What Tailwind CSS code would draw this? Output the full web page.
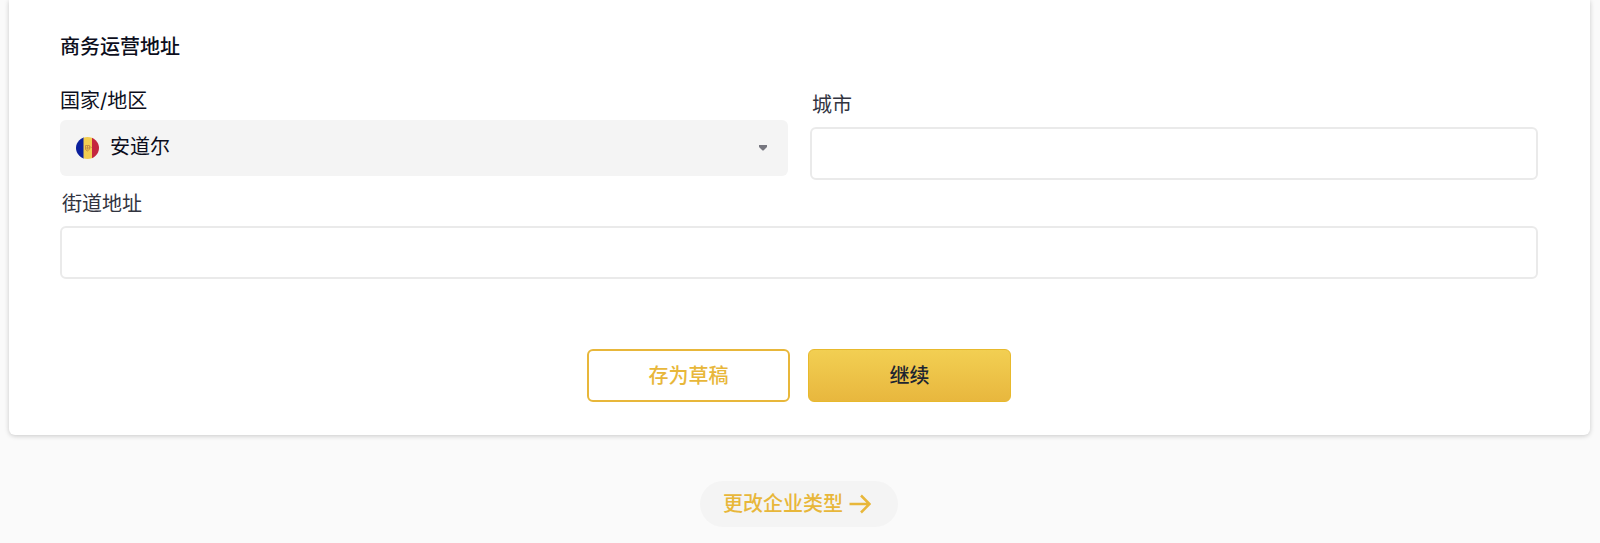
<!DOCTYPE html>
<html lang="zh-CN">
<head>
    <meta charset="UTF-8">
    <meta name="viewport" content="width=device-width, initial-scale=1">
    <title>商务运营地址</title>
    <script src="https://cdn.jsdelivr.net/npm/@tailwindcss/browser@4"></script>
</head>
<body class="bg-[#fafafa] min-h-screen font-['Inter','Noto_Sans_CJK_SC',sans-serif] text-xl leading-7 text-[#0c0e1c]">
    <!-- Address card -->
    <main class="ml-[9px] mr-[10px] pl-[51px] pr-[52px] py-[33px] bg-white rounded-b-md shadow-[0_1px_5px_rgba(0,0,0,0.2)]">
        <form>
            <h2 class="font-medium mb-[26px]">商务运营地址</h2>

            <div class="grid grid-cols-2 gap-x-[22px]">
                <div>
                    <label for="country" class="block mb-[5px]">国家/地区</label>
                    <div class="relative">
                        <select id="country" class="appearance-none block w-full h-14 pl-[50px] pr-12 pb-0.5 rounded-md bg-[#f4f4f4]">
                            <option>安道尔</option>
                        </select>
                        <!-- Flag of Andorra -->
                        <svg class="absolute left-4 top-4 w-[23px] h-6 pointer-events-none" viewBox="0 0 23 24" aria-hidden="true">
                            <clipPath id="flag"><ellipse cx="11.5" cy="12" rx="11.5" ry="11"/></clipPath>
                            <g clip-path="url(#flag)">
                                <path fill="#0a1f9c" d="M0 0h8v24H0z"/>
                                <path fill="#f2cd51" d="M7.5 0h9v24h-9z"/>
                                <path fill="#c4263e" d="M16 0h7v24h-7z"/>
                            </g>
                            <path fill="none" stroke="#c58f45" stroke-width="1" d="M9.5 9.5h4v3.500q-1.500 2-2 2q-2-1-2-2zM9.500 12h5M11.500 9.500v4M14.500 10.500l1 1.500"/>
                        </svg>
                        <svg class="absolute right-5 top-6 w-[10px] h-2 pointer-events-none" viewBox="0 0 10 8" aria-hidden="true">
                            <path fill="#76767f" d="M1 1h8v2L5.500 6.500h-1L1 3z"/>
                        </svg>
                    </div>
                </div>
                <div class="pt-1">
                    <label for="city" class="block mb-2 pl-0.5 text-[#32343f]">城市</label>
                    <input id="city" type="text" class="block w-full h-[53px] px-4 border-2 border-[#eaeaea] rounded-md">
                </div>
            </div>

            <div class="pt-[10px]">
                <label for="street" class="block mb-2 pl-0.5 text-[#32343f]">街道地址</label>
                <input id="street" type="text" class="block w-full h-[53px] px-4 border-2 border-[#eaeaea] rounded-md">
            </div>

            <div class="flex justify-center gap-[18px] mt-[70px]">
                <button type="button" class="w-[203px] h-[53px] rounded-md border-2 border-[#e8b73a] font-medium text-[#e8b73a]">存为草稿</button>
                <button type="submit" class="w-[203px] h-[53px] rounded-md border border-[#e8b92c] bg-linear-to-b from-[#f2cf52] to-[#e8b73e] font-medium text-[#1e2530]">继续</button>
            </div>
        </form>
    </main>

    <div class="flex justify-center ml-[9px] mr-[11px] pt-[46px] pb-4">
        <a href="#" class="flex items-center gap-1.5 h-[46px] pl-[23px] pr-[27px] rounded-full bg-[#f4f4f4] font-medium text-[#e8b73a]">
            更改企业类型
            <svg class="w-[22px] h-5" viewBox="0 0 22 20" fill="none" stroke="currentColor" stroke-width="2.5" aria-hidden="true">
                <path d="M.5 10h20M12 1.500l8.500 8.500-8.500 8.500"/>
            </svg>
        </a>
    </div>
</body>
</html>
